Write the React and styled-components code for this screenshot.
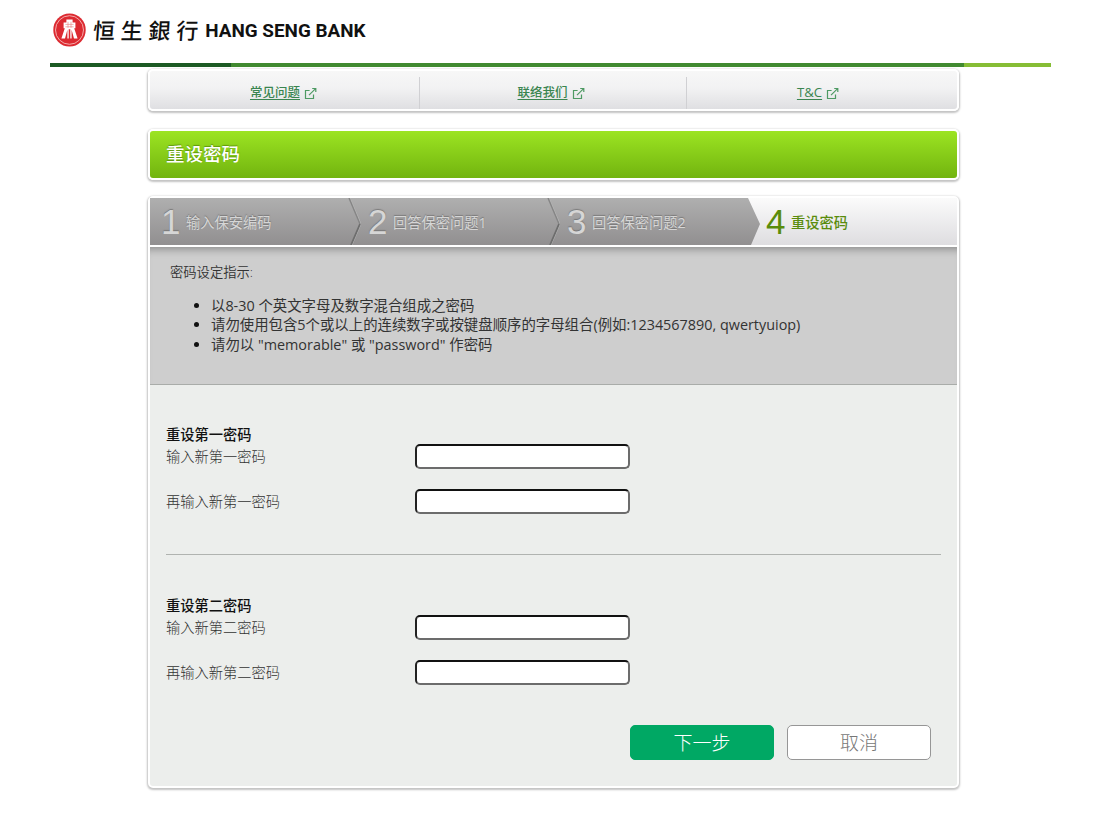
import React from 'react';
import styled, { createGlobalStyle } from 'styled-components';

const navLinks = [
  { label: '常见问题', width: 269, offset: 2 },
  { label: '联络我们', width: 267, offset: 4 },
  { label: 'T&C', width: 271, offset: 8 },
];

const steps = [
  { label: '输入保安编码', width: 211, pad: 11 },
  { label: '回答保密问题1', width: 199, pad: 7 },
  { label: '回答保密问题2', width: 200, pad: 7 },
  { label: '重设密码', width: 197, pad: 6 },
];

const rules = [
  '以8-30 个英文字母及数字混合组成之密码',
  '请勿使用包含5个或以上的连续数字或按键盘顺序的字母组合(例如:1234567890, qwertyuiop)',
  '请勿以 "memorable" 或 "password" 作密码',
];

const groups = [
  { title: '重设第一密码', fields: ['输入新第一密码', '再输入新第一密码'] },
  { title: '重设第二密码', fields: ['输入新第二密码', '再输入新第二密码'] },
];

function Logo() {
  return (
    <svg width="33" height="34" viewBox="0 0 33 34">
      <ellipse cx="16.5" cy="17" rx="16.2" ry="16.5" fill="#dc2a31" />
      <ellipse
        cx="16.5"
        cy="17"
        rx="14"
        ry="14.3"
        fill="none"
        stroke="#f6b9b8"
        strokeWidth="0.9"
      />
      <path
        d="M13.4 6.4h6.2v3.2h2.8v5.6h-1.2l3.4 10.4h-3.6l-2.4-8.8v8.8h-1.3v-9.4h-1.6v9.4h-1.3v-8.8L12 25.6H8.4l3.4-10.4h-1.2V9.6h2.8z"
        fill="#fff"
      />
      <path
        d="M12.4 11.4h8.2M12.4 13.8h8.2M15 8.8v6M18 8.8v6"
        stroke="#eb8d8e"
        strokeWidth="0.7"
      />
    </svg>
  );
}

function ExternalIcon() {
  return (
    <svg
      width="13"
      height="13"
      viewBox="0 0 13 13"
      fill="none"
      stroke="#4e9a63"
      strokeWidth="1.2"
    >
      <path d="M5.6 3.5H1.5v8h8V7.6" />
      <path d="M5 8.2L11.6 1.6M8.2 1.5h3.6v3.6" />
    </svg>
  );
}

function Arrow({ last }) {
  return (
    <svg width="14" height="47" viewBox="0 0 14 47">
      {last ? (
        <>
          <defs>
            <linearGradient id="light" x1="0" y1="0" x2="0" y2="1">
              <stop offset="0" stopColor="#fbfbfb" />
              <stop offset="1" stopColor="#dedde0" />
            </linearGradient>
          </defs>
          <path d="M2 0L14 26L5 47H14V0z" fill="url(#light)" />
        </>
      ) : (
        <>
          <path d="M3 0L14 26L5 47" fill="none" stroke="#b5b5b5" />
          <path d="M2 0L13 26" fill="none" stroke="#858585" strokeWidth="1.4" />
          <path d="M13 26L4 47" fill="none" stroke="#6d6d6d" strokeWidth="1.8" />
        </>
      )}
    </svg>
  );
}

function App() {
  return (
    <Page>
      <GlobalStyle />
      <Header>
        <Logo />
        <ChineseName>恒生銀行</ChineseName>
        <EnglishName>HANG SENG BANK</EnglishName>
      </Header>
      <Stripe />

      <Content>
        <Nav>
          {navLinks.map((item) => (
            <NavItem key={item.label} $width={item.width} $offset={item.offset}>
              <a href="#top">{item.label}</a>
              <ExternalIcon />
            </NavItem>
          ))}
        </Nav>

        <Title>重设密码</Title>

        <Panel>
          <Steps>
            {steps.map((step, i) => (
              <Step
                key={step.label}
                $width={step.width}
                $pad={step.pad}
                $active={i === 3}
              >
                <StepNumber>{i + 1}</StepNumber>
                <StepLabel>{step.label}</StepLabel>
                {i < 3 && <Arrow last={i === 2} />}
              </Step>
            ))}
          </Steps>

          <Guide>
            <p>密码设定指示:</p>
            <ul>
              {rules.map((rule) => (
                <li key={rule}>{rule}</li>
              ))}
            </ul>
          </Guide>

          <Form onSubmit={(e) => e.preventDefault()}>
            {groups.map((group) => (
              <Group key={group.title}>
                <h2>{group.title}</h2>
                {group.fields.map((field) => (
                  <Field key={field}>
                    <span>{field}</span>
                    <input type="password" />
                  </Field>
                ))}
              </Group>
            ))}
            <Buttons>
              <Button $primary>下一步</Button>
              <Button type="button">取消</Button>
            </Buttons>
          </Form>
        </Panel>
      </Content>
    </Page>
  );
}

export default App;

const GlobalStyle = createGlobalStyle`
  * {
    box-sizing: border-box;
  }

  body {
    margin: 0;
    background: #fff;
    color: #333;
    font-family: 'Open Sans', 'Noto Sans CJK SC', sans-serif;
    font-size: 14.25px;
  }

  h1, h2, p, ul {
    margin: 0;
    padding: 0;
  }
`;

const Page = styled.div`
  height: 826px;
  overflow: hidden;
`;

const Header = styled.header`
  display: flex;
  align-items: center;
  height: 63px;
  padding: 0 0 3px 53px;
`;

const ChineseName = styled.span`
  margin-left: 7px;
  padding-bottom: 3px;
  color: #111;
  font-family: 'Noto Sans CJK TC', sans-serif;
  font-size: 22px;
  font-weight: 500;
  letter-spacing: 5.8px;
  line-height: 30px;
  white-space: nowrap;
  transform: skewX(-4deg);
`;

const EnglishName = styled.span`
  margin-left: 1px;
  padding-top: 2px;
  color: #111;
  font-family: Roboto, sans-serif;
  font-size: 18.9px;
  font-weight: 700;
  line-height: 30px;
  white-space: nowrap;
`;

const Stripe = styled.div`
  width: 1001px;
  height: 4px;
  margin-left: 50px;
  background: linear-gradient(
    to right,
    #1c5a24 181px,
    #418a30 181px,
    #418a30 914px,
    #86bd35 914px
  );
`;

const Content = styled.main`
  width: 811px;
  margin: 2px 0 0 148px;
`;

const Box = styled.div`
  border: 2px solid #fff;
  border-radius: 5px;
  box-shadow: 0 1px 2px 1px rgba(0, 0, 0, 0.24);
`;

const Nav = styled(Box)`
  display: flex;
  height: 42px;
  background: linear-gradient(#f7f7f7, #f2f2f3 45%, #dfdfe2);
`;

const NavItem = styled.div`
  display: flex;
  justify-content: center;
  align-items: center;
  gap: 4px;
  width: ${(props) => props.$width}px;
  margin-top: 6px;
  padding: 0 ${(props) => props.$offset}px 1px 0;

  & + & {
    border-left: 1px solid #d0d0d3;
  }

  a {
    color: #3a8550;
    font-size: 12.5px;
    font-weight: 500;
    line-height: 18px;
    text-underline-offset: 2px;
  }

  &:last-child a {
    padding-bottom: 2px;
    font-size: 13.2px;
  }

  svg {
    margin-top: 2px;
  }
`;

const Title = styled(Box).attrs({ as: 'h1' })`
  height: 51px;
  margin-top: 18px;
  padding-left: 16px;
  background: linear-gradient(#9ce422, #72b40f);
  color: #fff;
  font-size: 18.5px;
  font-weight: 500;
  line-height: 46px;
  text-shadow: 0 -1px 1px rgba(50, 90, 0, 0.5);
`;

const Panel = styled(Box)`
  height: 592px;
  margin-top: 16px;
  background: #eceeec;
`;

const Steps = styled.div`
  display: flex;
  height: 49px;
  border-bottom: 2px solid #fff;
`;

const Step = styled.div`
  display: flex;
  align-items: center;
  width: ${(props) => props.$width}px;
  height: 47px;
  padding-left: ${(props) => props.$pad}px;
  background: ${(props) =>
    props.$active
      ? 'linear-gradient(#fbfbfb, #dedde0)'
      : 'linear-gradient(#afafaf, #918f90)'};
  color: ${(props) => (props.$active ? '#5a8c0c' : '#d6d6d6')};
  font-weight: ${(props) => (props.$active ? 500 : 400)};
  text-shadow: ${(props) =>
    props.$active ? 'none' : '0 -1px 1px rgba(80, 80, 80, 0.5)'};

  svg {
    margin-left: auto;
  }
`;

const StepNumber = styled.span`
  width: 19px;
  margin-right: 6px;
  font-family: 'Liberation Sans', sans-serif;
  font-size: 35px;
  font-weight: 400;
  line-height: 47px;
`;

const StepLabel = styled.span`
  padding-top: 2px;
  line-height: 20px;
  white-space: nowrap;
`;

const Guide = styled.section`
  height: 138px;
  padding: 16px 20px 0;
  border-bottom: 1px solid #a9aca9;
  background: #cecece;
  box-shadow: inset 0 9px 8px -7px rgba(0, 0, 0, 0.35);
  font-size: 14.4px;
  line-height: 19.5px;

  p {
    font-size: 13.3px;
    font-weight: 350;
  }

  ul {
    margin-top: 13px;
    padding-left: 41px;
    font-weight: 400;
  }

  li::marker {
    color: #111;
  }
`;

const Form = styled.form`
  padding: 0 16px;
`;

const Group = styled.section`
  height: 169px;
  padding-top: 39px;

  & + & {
    height: 171px;
    padding-top: 40px;
    border-top: 1px solid #b0b3b0;
  }

  h2 {
    height: 20px;
    color: #111;
    font-size: 14.25px;
    font-weight: 500;
    line-height: 22px;
  }
`;

const Field = styled.label`
  display: flex;
  align-items: center;
  height: 25px;
  margin-bottom: 20px;
  font-weight: 300;

  span {
    width: 249px;
    padding-bottom: 3px;
  }

  input {
    width: 215px;
    height: 25px;
    border: 2px solid #6c6c6c;
    border-top-color: #111;
    border-left-color: #222;
    border-radius: 5px;
    background: #fff;
  }
`;

const Buttons = styled.div`
  display: flex;
  justify-content: flex-end;
  gap: 13px;
  padding-right: 10px;
`;

const Button = styled.button`
  width: 144px;
  height: 35px;
  padding: 0 0 2px;
  border: 1px solid ${(props) => (props.$primary ? '#00a864' : '#969696')};
  border-radius: 5px;
  background: ${(props) => (props.$primary ? '#00a864' : '#fff')};
  color: ${(props) => (props.$primary ? '#fff' : '#777')};
  font-family: inherit;
  font-size: 19px;
  font-weight: 300;
`;
